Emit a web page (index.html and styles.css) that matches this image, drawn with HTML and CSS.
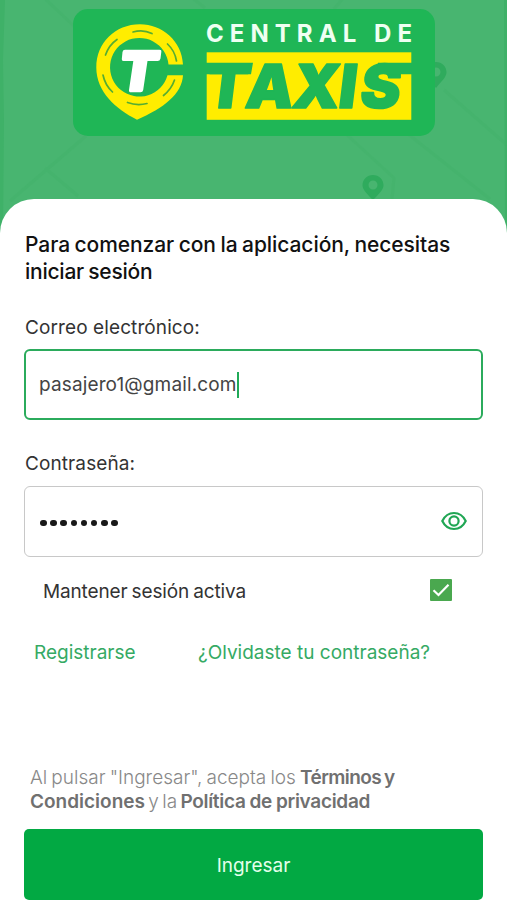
FILE: index.html
```html
<!DOCTYPE html>
<html lang="es">
<head>
<meta charset="utf-8">
<title>Central de Taxis</title>
<link rel="stylesheet" href="styles.css">
</head>
<body>
<main class="screen">
  <header class="hero">
    <svg class="map" viewBox="0 0 507 235" aria-hidden="true">
      <rect width="507" height="235" fill="#48b570"/>
      <path d="M0 0H5L3 60 4 120 3 235H0ZM504 0H507V235H505Z" fill="#3fb168"/>
      <g fill="none" stroke="#40b169" stroke-width="3" opacity=".4">
        <path d="M40 -6 76 28M86 136 10 201M45 168 78 196M190 -4 205 8M346 134 394 178 392 199M408 134 490 199M444 90 507 145M334 9 345 -4"/>
      </g>
      <g fill="#2fab5d">
        <path fill-rule="evenodd" d="M373 175c-6 0-10.500 4.500-10.500 10.300 0 5 5 9 10.500 14.700 5.500-5.700 10.500-9.700 10.500-14.700 0-5.800-4.500-10.300-10.500-10.300Zm0 5.500a4.500 4.500 0 1 1 0 9 4.500 4.500 0 0 1 0-9Z"/>
        <path fill-rule="evenodd" d="M436 62c-6 0-10.500 4.500-10.500 10.300 0 5 5 9 10.500 15.700 5.500-6.700 10.500-10.700 10.500-15.700 0-5.800-4.500-10.300-10.500-10.300Zm0 5.500a4.500 4.500 0 1 1 0 9 4.500 4.500 0 0 1 0-9Z"/>
      </g>
    </svg>
    <svg class="logo" viewBox="73 9 362 127" role="img" aria-label="Central de Taxis">
      <rect x="73" y="9" width="362" height="127" rx="15" fill="#1fb656"/>
      <path fill="#ffed00" d="M183 64.500C182 41 162 24.300 140 24.300 115 24.300 96.300 43 96.300 67.500 96.300 92 116 109 137 119.700 164 108 182 94 183 75.300H167.500A29.300 29.300 0 1 1 168.500 64.500Z"/>
      <g fill="none" stroke="#55ad32" stroke-width="1.700" stroke-linecap="round">
        <path d="M133 32Q143 29 152 33.500M105.500 55Q109 45 117 39.500M167.500 44Q175 51 176.500 61M103 75Q105 85 112.500 92M127.500 102.500Q137 106 147 103.500M174.500 80Q171.500 89 163.500 95.500"/>
      </g>
      <path fill="#fff" d="M125 49.700H159.500Q161.700 49.700 161.300 52L160.500 58.500Q160 61 157.500 61H147.500L143.200 90Q142.800 92.300 140.500 92.300H131Q128.700 92.300 129 90L133.300 61H123.500Q121.500 61 121.800 59L122.500 52Q122.900 49.700 125 49.700Z"/>
      <text class="logo-top" x="206" y="42" textLength="206">CENTRAL DE</text>
      <rect x="206.700" y="52.300" width="204.600" height="67.500" fill="#ffed00"/>
      <g transform="translate(0 107.500) skewX(-7)">
        <text class="logo-main" y="0" x="204 244 290.500 337 358.500">TAXIS</text>
      </g>
      <path fill="#1fb656" d="M206 62.800H253L251 74.300H206ZM378 62.800H412V74.300H376Z"/>
    </svg>
  </header>

  <section class="card">
    <h1 class="title"><span class="t1">Para comenzar con la aplicación, necesitas</span><br><span class="t2">iniciar sesión</span></h1>

    <div class="label email-label">Correo electrónico:</div>
    <div class="field active"><span class="value">pasajero1@gmail.com</span><i class="caret"></i></div>

    <div class="label pass-label">Contraseña:</div>
    <div class="field">
      <span class="dots"><i></i><i></i><i></i><i></i><i></i><i></i><i></i><i></i></span>
      <svg class="eye" viewBox="0 0 26 20" fill="none" stroke="#20a654" stroke-width="2.200">
        <path d="M1.300 10C4 4.500 8 2 13 2S22 4.500 24.700 10C22 15.500 18 18 13 18S4 15.500 1.300 10Z"/>
        <circle cx="13" cy="10" r="4.600"/>
      </svg>
    </div>

    <div class="keep">
      <span>Mantener sesión activa</span>
      <svg class="check" viewBox="0 0 22 22"><rect width="22" height="22" rx="1" fill="#4aa84f"/><path d="M3.500 11.300 8.500 16 18.500 5.800" fill="none" stroke="#fff" stroke-width="2.200"/></svg>
    </div>

    <nav class="links"><a class="register">Registrarse</a><a class="forgot">¿Olvidaste tu contraseña?</a></nav>

    <p class="legal"><span class="l1">Al pulsar "Ingresar", acepta los <b>Términos y</b></span><br><span class="l2"><b class="wide">Condiciones</b> y la <b>Política de privacidad</b></span></p>
    <button class="submit">Ingresar</button>
  </section>
</main>
</body>
</html>
```
FILE: styles.css
```css
* { box-sizing: border-box; }
body { margin: 0; background: #fff; font-family: Inter, "Open Sans", sans-serif; }
.screen { width: 507px; height: 900px; overflow: hidden; display: flex; flex-direction: column; }
.hero { height: 199px; flex: none; display: grid; justify-items: start; align-items: start; }
.map, .logo { grid-area: 1 / 1; display: block; }
.map { width: 507px; height: 235px; }
.logo { width: 362px; height: 127px; margin: 9px 0 0 73px; }
.logo-top { font: 700 24px Inter, sans-serif; fill: #effff2; }
.logo-main { font: italic 900 60.500px Inter, sans-serif; fill: #1fb656; stroke: #1fb656; stroke-width: 1.500px; stroke-linejoin: round; }
.logo-main { font-style: normal; }
.card { position: relative; height: 701px; padding: 32px 24px 0; background: #fff; border-radius: 34px 34px 0 0; display: flex; flex-direction: column; }
.title { margin: 0 0 0 1px; font-size: 21px; font-weight: 500; line-height: 27px; color: #111; white-space: nowrap; height: 54px; }
.t1 { letter-spacing: -.07px; word-spacing: -1px; }
.t2 { letter-spacing: -.25px; word-spacing: -1px; }
.label { margin-left: 1px; font-size: 19px; line-height: 26px; color: #333; letter-spacing: .1px; }
.email-label { margin-top: 30px; }
.pass-label { margin-top: 31px; }
.field { flex: none; height: 71px; margin-top: 8px; padding: 0 15px; border: 1.500px solid #c8c8c8; border-radius: 6px; display: flex; align-items: center; }
.pass-label + .field { margin-top: 9px; }
.field.active { border: 2px solid #2bab5c; padding: 0 13px; }
.value { font-size: 19px; color: #444; letter-spacing: .13px; }
.caret { width: 2px; height: 26px; background: #20aa57; }
.dots { display: flex; gap: 3.700px; margin-top: 3px; }
.dots i { width: 6.500px; height: 6.500px; border-radius: 50%; background: #181818; }
.eye { width: 26px; height: 20px; margin: -2px 0 0 auto; }
.keep { margin: 21px 31px 0 19px; height: 26px; display: flex; justify-content: space-between; align-items: center; font-size: 19px; color: #333; letter-spacing: -.15px; word-spacing: -1px; }
.check { width: 22px; height: 22px; margin-top: -3px; }
.links { margin: 36px 0 0 10px; height: 26px; line-height: 26px; display: flex; font-size: 19px; color: #35aa64; }
.register { width: 164px; }
.legal { margin: 100px 0 0 6px; height: 48px; font-size: 19px; line-height: 24px; color: #888; font-weight: 300; white-space: nowrap; word-spacing: -1.200px; }
.legal b { font-weight: 600; color: #707070; letter-spacing: -.3px; }
.legal .l1 b { letter-spacing: -.6px; }
.legal b.wide { letter-spacing: 0; }
.l2 { word-spacing: -2px; }
.l2 b { word-spacing: -.500px; }
.submit { flex: none; height: 71px; margin: 15px 0 0; padding: 1px 0 0; border: 0; border-radius: 5px; background: #02a943; color: #e4ffeb; font: 400 19px Inter, sans-serif; }
```
